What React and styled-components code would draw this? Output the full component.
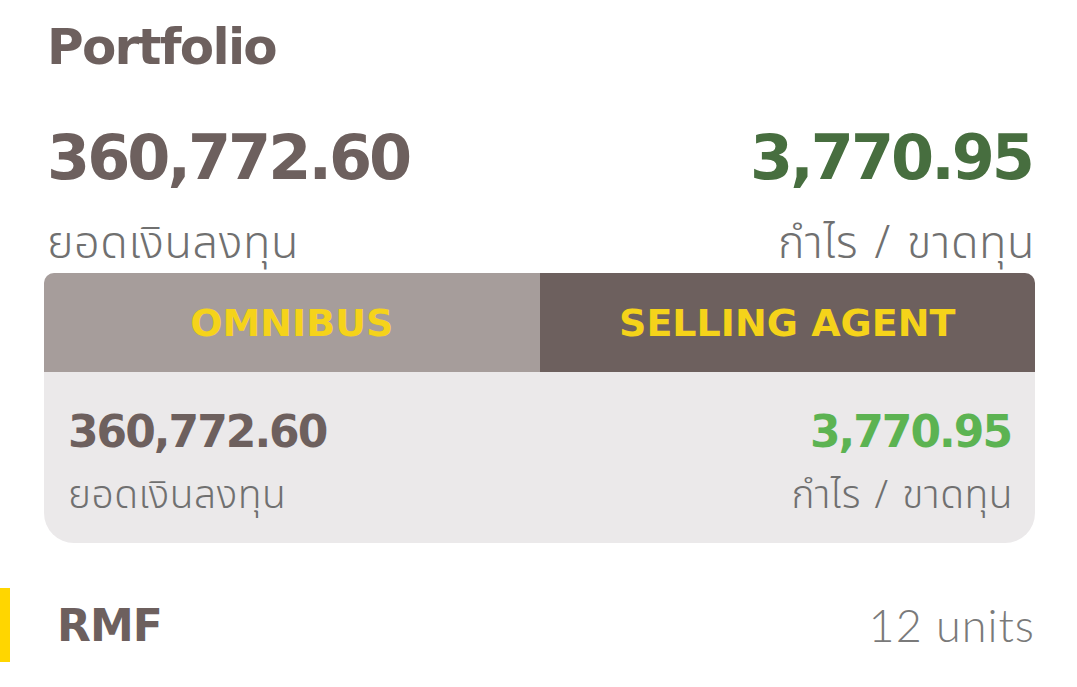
import React from 'react'
import styled, { createGlobalStyle } from 'styled-components'

const GlobalStyle = createGlobalStyle`
  body {
    margin: 0;
    background: #ffffff;
    font-family: "DejaVu Sans", "Noto Sans", sans-serif;
  }
`

const summary = { invested: '360,772.60', profit: '3,770.95' }

export default function App() {
  return (
    <>
      <GlobalStyle />
      <Page>
        <Title>Portfolio</Title>
        <SummaryRow>
          <Figure>
            <BigValue>{summary.invested}</BigValue>
            <Label>ยอดเงินลงทุน</Label>
          </Figure>
          <Figure $right>
            <BigValue $color="#476e3f">{summary.profit}</BigValue>
            <Label>กำไร / ขาดทุน</Label>
          </Figure>
        </SummaryRow>

        <Card>
          <Tabs>
            <Tab $bg="#a69d9b">OMNIBUS</Tab>
            <Tab $bg="#6d605e">SELLING AGENT</Tab>
          </Tabs>
          <CardBody>
            <Figure>
              <SmallValue>{summary.invested}</SmallValue>
              <SmallLabel>ยอดเงินลงทุน</SmallLabel>
            </Figure>
            <Figure $right>
              <SmallValue $color="#5cb352">{summary.profit}</SmallValue>
              <SmallLabel>กำไร / ขาดทุน</SmallLabel>
            </Figure>
          </CardBody>
        </Card>
      </Page>

      <FundRow>
        <FundName>RMF</FundName>
        <Units>12 units</Units>
      </FundRow>
    </>
  )
}

const Page = styled.div`
  padding: 0 42px 0 44px;
`

const Title = styled.h1`
  margin: 0;
  padding: 18px 0 0 3px;
  font-size: 50px;
  line-height: 58px;
  font-weight: 700;
  color: #6d605e;
  letter-spacing: -1.7px;
`

const SummaryRow = styled.div`
  display: flex;
  justify-content: space-between;
  padding: 0 0 0 3px;
  margin-top: 51px;
`

const Figure = styled.div`
  display: flex;
  flex-direction: column;
  align-items: ${p => (p.$right ? 'flex-end' : 'flex-start')};
`

const BigValue = styled.div`
  font-size: 62px;
  line-height: 62px;
  font-weight: 700;
  color: ${p => p.$color || '#6d605e'};
  letter-spacing: -3px;
  margin-right: 3px;
`

const Label = styled.div`
  margin-top: 28px;
  font-family: "Noto Sans Thai", "Noto Sans", sans-serif;
  font-weight: 300;
  font-size: 45px;
  line-height: 54px;
  color: #707070;
  letter-spacing: 0.6px;
  word-spacing: 4px;
`

const Card = styled.div`
  margin-top: 2px;
  border-radius: 10px 10px 30px 30px;
  overflow: hidden;
  background: #ebe9ea;
`

const Tabs = styled.div`
  display: grid;
  grid-template-columns: 1fr 1fr;
  height: 99px;
`

const Tab = styled.div`
  display: flex;
  align-items: center;
  justify-content: center;
  background: ${p => p.$bg};
  color: #f5d31a;
  font-size: 38px;
  font-weight: 700;
`

const CardBody = styled.div`
  display: flex;
  justify-content: space-between;
  padding: 36px 22px 23px 24px;
`

const SmallValue = styled.div`
  font-size: 44px;
  line-height: 48px;
  font-weight: 700;
  color: ${p => p.$color || '#6d605e'};
  letter-spacing: -2px;
  margin-right: 2px;
`

const SmallLabel = styled.div`
  margin-top: 18px;
  font-family: "Noto Sans Thai", "Noto Sans", sans-serif;
  font-weight: 300;
  font-size: 39px;
  line-height: 46px;
  color: #707070;
  letter-spacing: 0.5px;
  word-spacing: 3px;
`

const FundRow = styled.div`
  display: flex;
  align-items: center;
  justify-content: space-between;
  margin-top: 45px;
  height: 74px;
  box-sizing: border-box;
  padding: 0 42px 0 47px;
  border-left: 10px solid #ffd600;
`

const FundName = styled.div`
  font-size: 44px;
  font-weight: 700;
  color: #6d605e;
  letter-spacing: -1px;
`

const Units = styled.div`
  font-family: "Lato", sans-serif;
  font-weight: 300;
  font-size: 45px;
  color: #7a7a7a;
  letter-spacing: 1px;
`
